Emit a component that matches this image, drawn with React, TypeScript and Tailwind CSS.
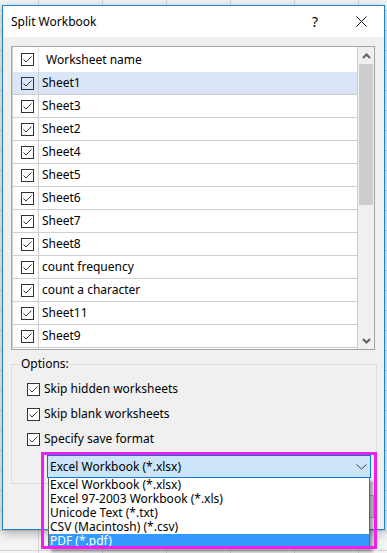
import React from "react";

const SHEETS = [
  "Sheet1",
  "Sheet3",
  "Sheet2",
  "Sheet4",
  "Sheet5",
  "Sheet6",
  "Sheet7",
  "Sheet8",
  "count frequency",
  "count a character",
  "Sheet11",
  "Sheet9",
  "Sheet10",
];

const FORMATS = [
  "Excel Workbook (*.xlsx)",
  "Excel 97-2003 Workbook (*.xls)",
  "Unicode Text (*.txt)",
  "CSV (Macintosh) (*.csv)",
  "PDF (*.pdf)",
];

function CheckBox({ white = false }: { white?: boolean }) {
  return (
    <span
      className={`flex h-[13px] w-[13px] shrink-0 items-center justify-center border border-[#333333] ${
        white ? "bg-white" : ""
      }`}
    >
      <svg width="11" height="11" viewBox="0 0 11 11" aria-hidden>
        <polyline
          points="1.5,5.5 4,8 9.5,2.5"
          fill="none"
          stroke="#3a3a3a"
          strokeWidth="1"
        />
      </svg>
    </span>
  );
}

function Caret({ down = false }: { down?: boolean }) {
  return (
    <svg width="9" height="6" viewBox="0 0 9 6" aria-hidden>
      <polyline
        points={down ? "1,1 4.5,4.5 8,1" : "1,5 4.5,1.5 8,5"}
        fill="none"
        stroke="#606060"
        strokeWidth="2"
      />
    </svg>
  );
}

function SheetList() {
  return (
    <div className="ml-[8px] mt-[9px] flex h-[304px] w-[364px] overflow-hidden border border-[#a5a5a5] bg-white">
      <div className="flex flex-1 flex-col overflow-hidden border-l border-[#d0d0d0]">
        <div className="flex h-[25px] shrink-0">
          <div className="flex w-[26px] items-center justify-center border-r border-[#e6e6e6] pl-[3px]">
            <CheckBox />
          </div>
          <div className="flex items-center pl-[7px]">Worksheet name</div>
        </div>
        {SHEETS.map((name, i) => (
          <div
            key={name}
            className={`flex h-[23px] shrink-0 border-b border-[#cfcfcf] ${
              i === 0 ? "bg-[#dae6f8]" : ""
            }`}
          >
            <div className="flex w-[26px] items-center justify-center border-r border-[#cfcfcf] pl-[3px]">
              <CheckBox />
            </div>
            <div className="flex items-center pl-[3px]">{name}</div>
          </div>
        ))}
      </div>
      <div className="flex w-[17px] shrink-0 flex-col border-l border-[#cfcfcf] bg-[#f0f0f0]">
        <div className="flex h-[17px] items-center justify-center">
          <Caret />
        </div>
        <div className="mx-[1px] h-[141px] bg-[#cdcdcd]" />
        <div className="flex-1" />
        <div className="flex h-[17px] items-center justify-center">
          <Caret down />
        </div>
      </div>
    </div>
  );
}

function FormatPicker() {
  return (
    <div className="relative ml-[35px] mt-[6px] flex h-[23px] w-[324px] items-center justify-between border border-[#0078d7] bg-[#cce4f7] pl-[2px] pr-[3px]">
      <span>Excel Workbook (*.xlsx)</span>
      <svg width="11" height="6" viewBox="0 0 11 6" aria-hidden>
        <polyline points="0.5,0.5 5.5,5 10.5,0.5" fill="none" stroke="#444444" strokeWidth="1" />
      </svg>

      <ul className="absolute left-[0px] top-[22px] z-10 w-[322px] border border-t-0 border-[#646464] bg-white shadow-[3px_3px_3px_rgba(0,0,0,0.35)]">
        {FORMATS.map((f, i) => (
          <li
            key={f}
            className={`h-[14px] pl-[1px] leading-[14px] ${
              i === FORMATS.length - 1 ? "bg-[#3399ff] text-white" : ""
            }`}
          >
            {f}
          </li>
        ))}
      </ul>

      <div className="pointer-events-none absolute left-[-7px] top-[-4px] z-20 h-[97px] w-[336px] border-[3px] border-[#f01ef0]" />
    </div>
  );
}

export default function App() {
  return (
    <div className="h-[553px] w-[387px] overflow-hidden bg-[#f4f4f4] bg-[linear-gradient(to_bottom,#d6d6d6_1px,transparent_1px),linear-gradient(to_right,#d6d6d6_1px,transparent_1px)] bg-[size:64px_20px] bg-[position:38px_10px] pt-[5px] font-['Noto_Sans','Liberation_Sans',sans-serif] text-[12px] text-black">
      <div className="ml-[2px] flex h-[525px] w-[383px] flex-col border border-[#1883d7] bg-[#f0f0f0] shadow-[0_3px_10px_rgba(0,0,0,0.3)]">
        <div className="flex h-[31px] shrink-0 items-center justify-between bg-white pl-[8px]">
          <span>Split Workbook</span>
          <div className="flex h-full">
            <div className="flex w-[46px] items-center justify-center text-[14px]">?</div>
            <div className="flex w-[46px] items-center justify-center">
              <svg width="11" height="11" viewBox="0 0 11 11" aria-hidden>
                <path d="M0.5 0.5 L10.5 10.5 M10.5 0.5 L0.5 10.5" stroke="#111111" strokeWidth="1" />
              </svg>
            </div>
          </div>
        </div>

        <SheetList />

        <fieldset className="ml-[8px] mt-[6px] w-[366px] border border-[#dcdcdc] p-0 pb-[5px]">
          <legend className="ml-[8px] px-[1px] leading-[16px]">Options:</legend>
          <div className="flex flex-col gap-[5px] pl-[15px] pt-[7px]">
            {["Skip hidden worksheets", "Skip blank worksheets", "Specify save format"].map((o) => (
              <label key={o} className="flex h-[20px] items-center gap-[4px]">
                <CheckBox white />
                <span>{o}</span>
              </label>
            ))}
          </div>
          <FormatPicker />
        </fieldset>

        {/* OK / Cancel sit under the open dropdown, only their edges show */}
        <div className="mt-[11px] flex justify-end gap-[8px] pr-[10px]">
          <button aria-label="Ok" className="h-[23px] w-[75px] border border-[#adadad] bg-[#e1e1e1]" />
          <button aria-label="Cancel" className="h-[23px] w-[75px] border border-[#adadad] bg-[#e1e1e1]" />
        </div>
      </div>
    </div>
  );
}
